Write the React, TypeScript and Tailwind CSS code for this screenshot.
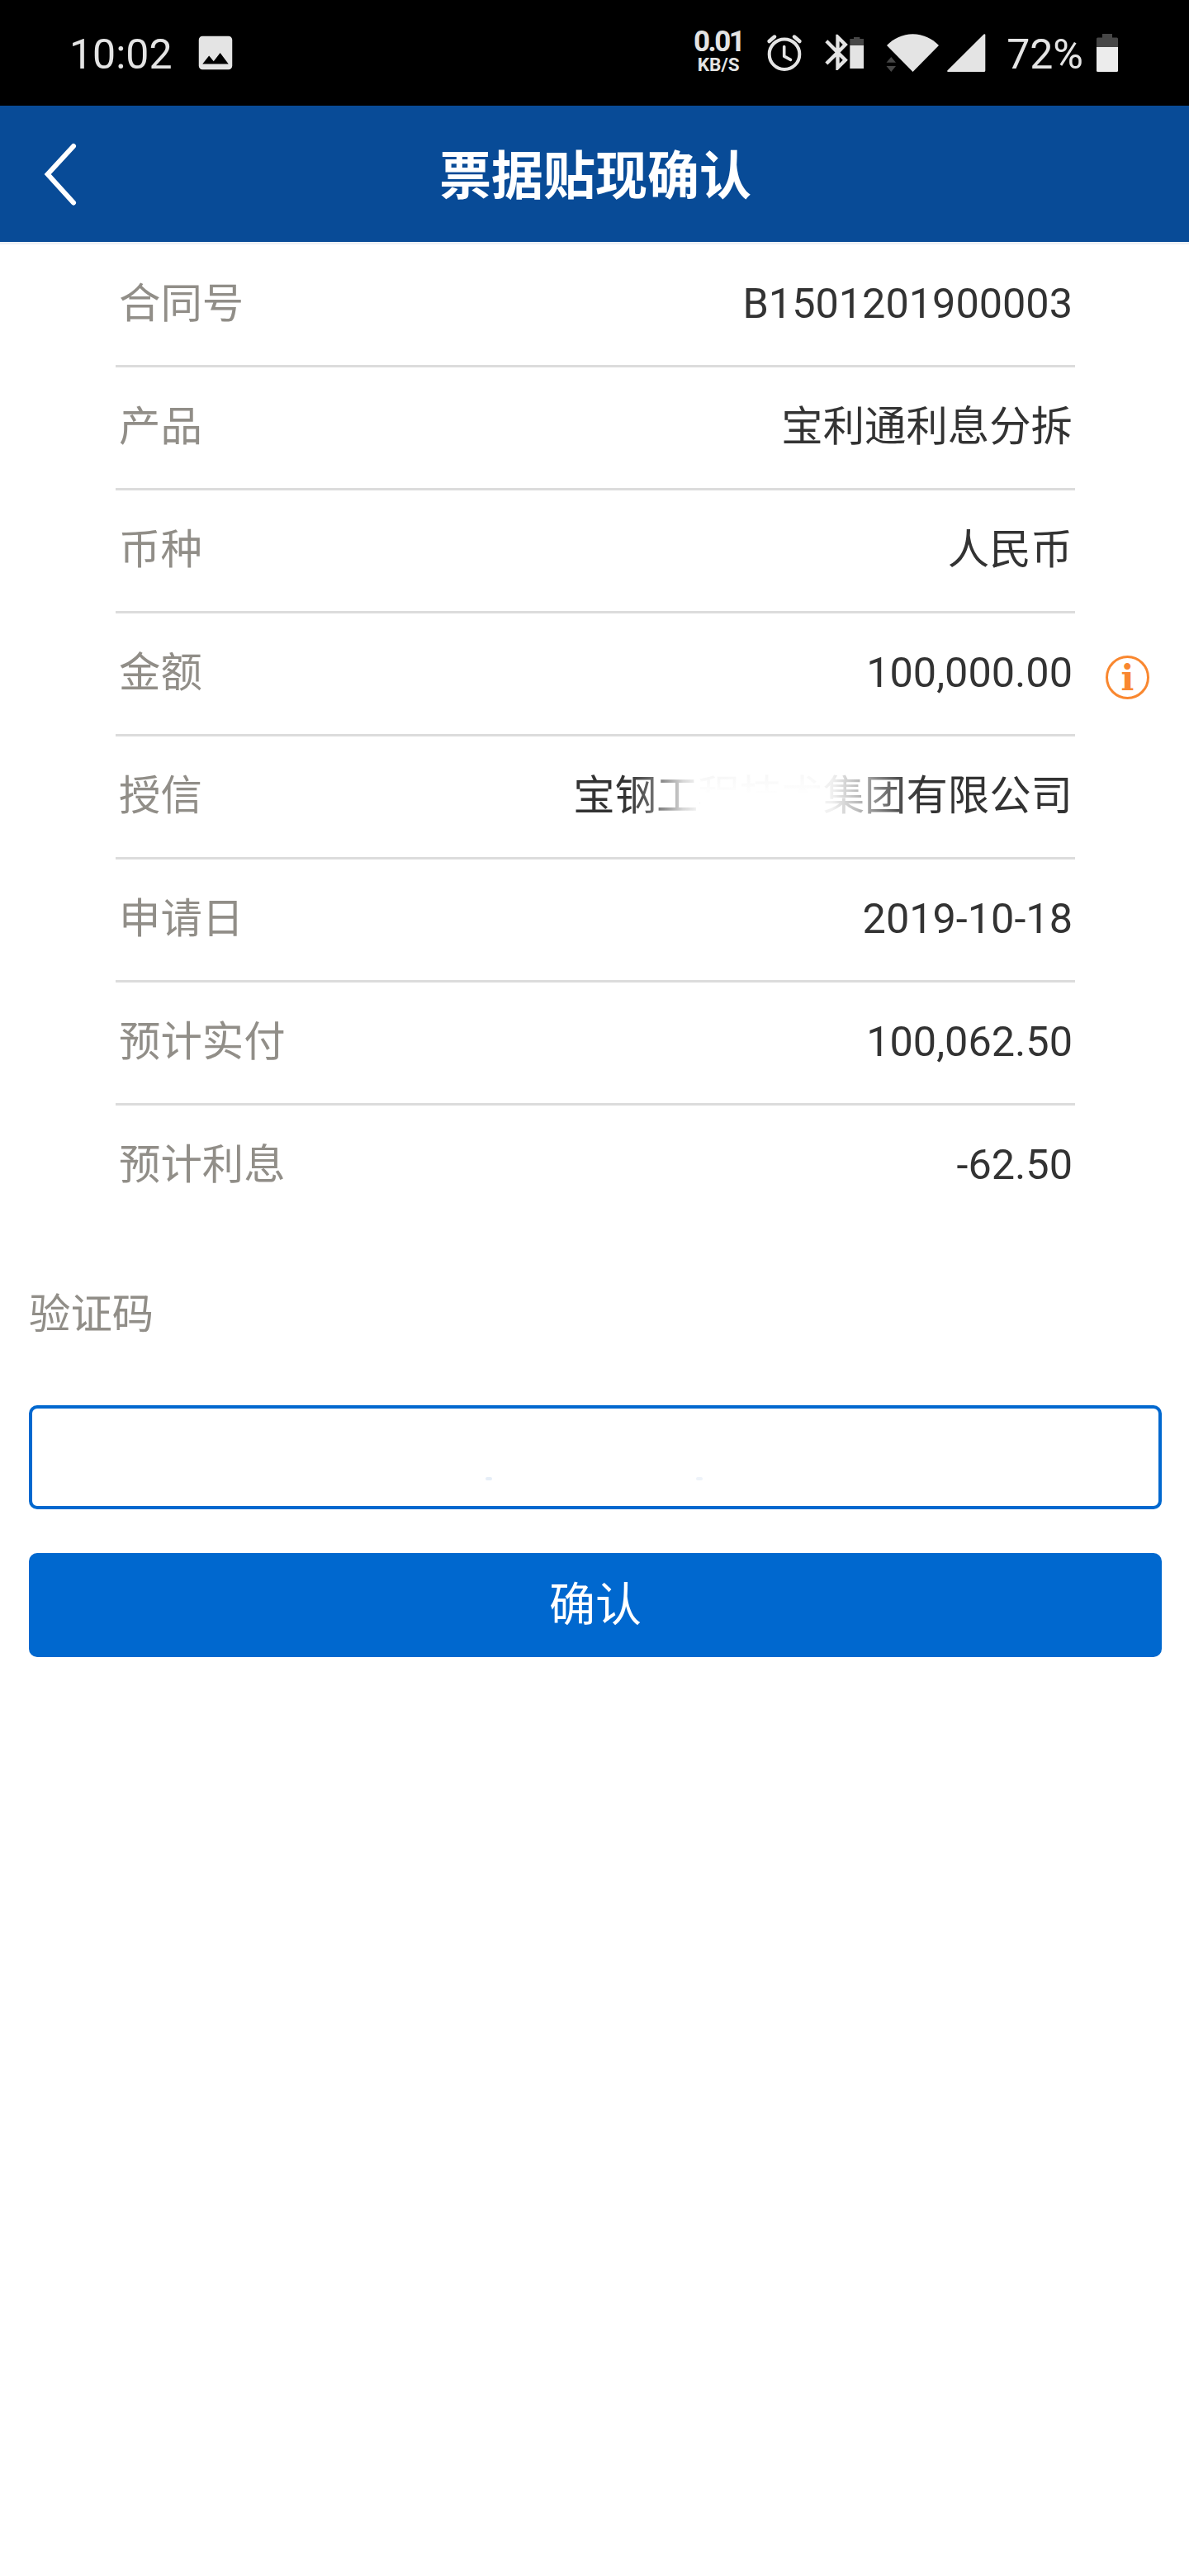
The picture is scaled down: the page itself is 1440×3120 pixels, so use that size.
import { useState } from "react";

interface DetailRow {
  label: string;
  value: string;
  info?: boolean;
  masked?: boolean;
}

const rows: DetailRow[] = [
  { label: "合同号", value: "B1501201900003" },
  { label: "产品", value: "宝利通利息分拆" },
  { label: "币种", value: "人民币" },
  { label: "金额", value: "100,000.00", info: true },
  { label: "授信", value: "宝钢工程技术集团有限公司", masked: true },
  { label: "申请日", value: "2019-10-18" },
  { label: "预计实付", value: "100,062.50" },
  { label: "预计利息", value: "-62.50" },
];

function StatusBar() {
  return (
    <div className="flex h-32 items-center bg-black pr-[86px] pl-[84px] text-[50px] leading-none text-[#e4e4e4]">
      <span className="mt-1">10:02</span>
      <svg className="ml-[25px] h-[54px] w-[54px]" viewBox="0 0 24 24" fill="currentColor">
        <path d="M21 19V5c0-1.1-.9-2-2-2H5c-1.1 0-2 .9-2 2v14c0 1.1.9 2 2 2h14c1.1 0 2-.9 2-2zM8.5 13.5l2.5 3.01L14.5 12l4.5 6H5l3.5-4.5z" />
      </svg>

      <div className="ml-auto flex items-center">
        <div className="-mt-0.5 flex w-[60px] flex-col items-center font-bold">
          <span className="text-[35px] leading-[30px] tracking-[-2.5px]">0.01</span>
          <span className="text-[22.5px] leading-6">KB/S</span>
        </div>

        {/* alarm */}
        <svg className="ml-7 h-[46px] w-[44px]" viewBox="928 41 44 46" fill="none" stroke="currentColor" strokeWidth="4" strokeLinecap="round">
          <circle cx="950" cy="65.7" r="18.3" />
          <path d="M931.6 50l6.4-5.4M968.4 50l-6.4-5.4" strokeWidth="4.6" />
          <path d="M949.7 56.5v11.7l7.8 4.2" strokeWidth="3.6" strokeLinejoin="round" />
        </svg>

        {/* bluetooth with device battery */}
        <svg className="ml-[27px] h-[46px] w-[48px]" viewBox="999 41 48 46" fill="currentColor">
          <path
            transform="translate(988.5 37.4) scale(2.167)"
            d="M17.71 7.71L12 2h-1v7.59L6.41 5 5 6.41 10.59 12 5 17.59 6.41 19 11 14.41V22h1l5.71-5.71-4.3-4.29 4.3-4.29zM13 5.83l1.88 1.88L13 9.59V5.83zm1.88 10.46L13 18.17v-3.76l1.88 1.88z"
          />
          <path d="M1029.3 47h4.7v-2h7.3v2h4.7v8h-16.7z" fill="#464646" />
          <path d="M1029.3 55h16.7v28h-16.7z" />
        </svg>

        {/* wifi */}
        <svg className="ml-[26px] h-[46px] w-[64px]" viewBox="1073 41 64 46" fill="currentColor">
          <path d="M1105.5 87l-31.5-32c8-8.500 19.500-13.800 31.500-13.800s23.500 5.300 31.500 13.800z" />
          <path d="M1073.500 75.700h11.500l-5.700-6.700zM1073.500 80h11.500l-5.700 7z" fill="#464646" />
        </svg>

        {/* signal */}
        <svg className="ml-2.5 h-[46px] w-[47px]" viewBox="1147 41 47 46" fill="currentColor">
          <path d="M1147.500 85.300L1191.500 41.500q1.800-1 1.800.8V85.500q0 1.500-1.500 1.500h-43.500q-1.800 0-.8-1.700z" />
        </svg>

        <span className="mt-1 ml-[25px]">72%</span>

        <svg className="ml-4 h-[46px] w-[26px]" viewBox="1328 41 26 46">
          <path d="M1328 57V47q0-1.500 1.500-1.500h5.500V41h12v4.500h5.500q1.500 0 1.500 1.500v10z" fill="#464646" />
          <path d="M1328 57h26v28.500q0 1.500-1.500 1.500h-23q-1.500 0-1.500-1.500z" fill="#ececec" />
        </svg>
      </div>
    </div>
  );
}

function InfoIcon() {
  return (
    <button className="absolute top-[51px] left-[1199px] flex h-[53px] w-[53px] items-center justify-center rounded-full border-[3px] border-[#f9872f] text-[#f9872f]" title="说明">
      <span className="mt-0.5 font-['DejaVu_Serif',serif] text-[42px] leading-none font-bold">i</span>
    </button>
  );
}

// company name with its middle characters faded out
function MaskedName({ name }: { name: string }) {
  return (
    <span className="relative text-[#333]">
      <span className="mask-[linear-gradient(to_right,#000_11%,rgba(0,0,0,0.65)_17%,rgba(0,0,0,0.2)_22%,rgba(0,0,0,0.04)_25.5%,rgba(0,0,0,0.03)_48%,rgba(0,0,0,0.08)_52%,rgba(0,0,0,0.38)_58%,rgba(0,0,0,0.85)_65%,#000_70%)]">
        {name}
      </span>
      <span className="absolute -top-1 left-[154px] h-[60px] w-[148px] bg-linear-to-b from-transparent from-10% to-white to-45%" />
    </span>
  );
}

export default function App() {
  const [code, setCode] = useState("");

  return (
    <div className="h-[3120px] w-[1440px] overflow-hidden bg-white font-['Roboto','Noto_Sans_CJK_SC',sans-serif]">
      <StatusBar />

      <header className="relative flex h-[168px] items-center justify-center border-b-[3px] border-[#eef1f5] bg-[#084b97] pt-1.5 pl-0.5">
        <button className="absolute top-[44px] left-[50px]">
          <svg className="block h-[78px] w-[46px]" viewBox="50 172 46 78" fill="none" stroke="#fff" strokeWidth="6" strokeLinecap="round">
            <path d="M89 177L57.700 211 89 245.500" />
          </svg>
        </button>
        <h1 className="text-[63px] leading-none font-bold text-white">票据贴现确认</h1>
      </header>

      <div className="ml-[140px] w-[1162px]">
        {rows.map((row, i) => (
          <div
            key={row.label}
            className={`relative flex h-[149px] items-center justify-between border-b-[3px] pr-[3px] pb-0.5 pl-1 text-[50.4px] leading-none ${i === rows.length - 1 ? "border-transparent" : "border-[#dcdcdc]"}`}
          >
            <span className="text-[#918e88]">{row.label}</span>
            {row.masked ? <MaskedName name={row.value} /> : <span className="text-[#333]">{row.value}</span>}
            {row.info && <InfoIcon />}
          </div>
        ))}
      </div>

      <form className="mt-[74px] flex w-[1407px] flex-col pl-[35px]" onSubmit={e => e.preventDefault()}>
        <label htmlFor="code" className="text-[50.4px] leading-[60px] text-[#918e88]">验证码</label>
        <div className="relative mt-20 h-[126px]">
          <input
            id="code"
            value={code}
            onChange={e => setCode(e.target.value)}
            className="block h-full w-full rounded-[10px] border-4 border-[#0068cf] px-6 text-center text-[50.4px] outline-none"
          />
          <span className="absolute top-[87px] left-[553px] h-1 w-2 rounded-full bg-[#e6eef7]" />
          <span className="absolute top-[87px] left-[808px] h-1 w-2 rounded-full bg-[#eef3f9]" />
        </div>
        <button type="submit" className="mt-[53px] h-[126px] w-full rounded-[10px] bg-[#0068cf] text-[56px] leading-none text-white">
          确认
        </button>
      </form>
    </div>
  );
}
